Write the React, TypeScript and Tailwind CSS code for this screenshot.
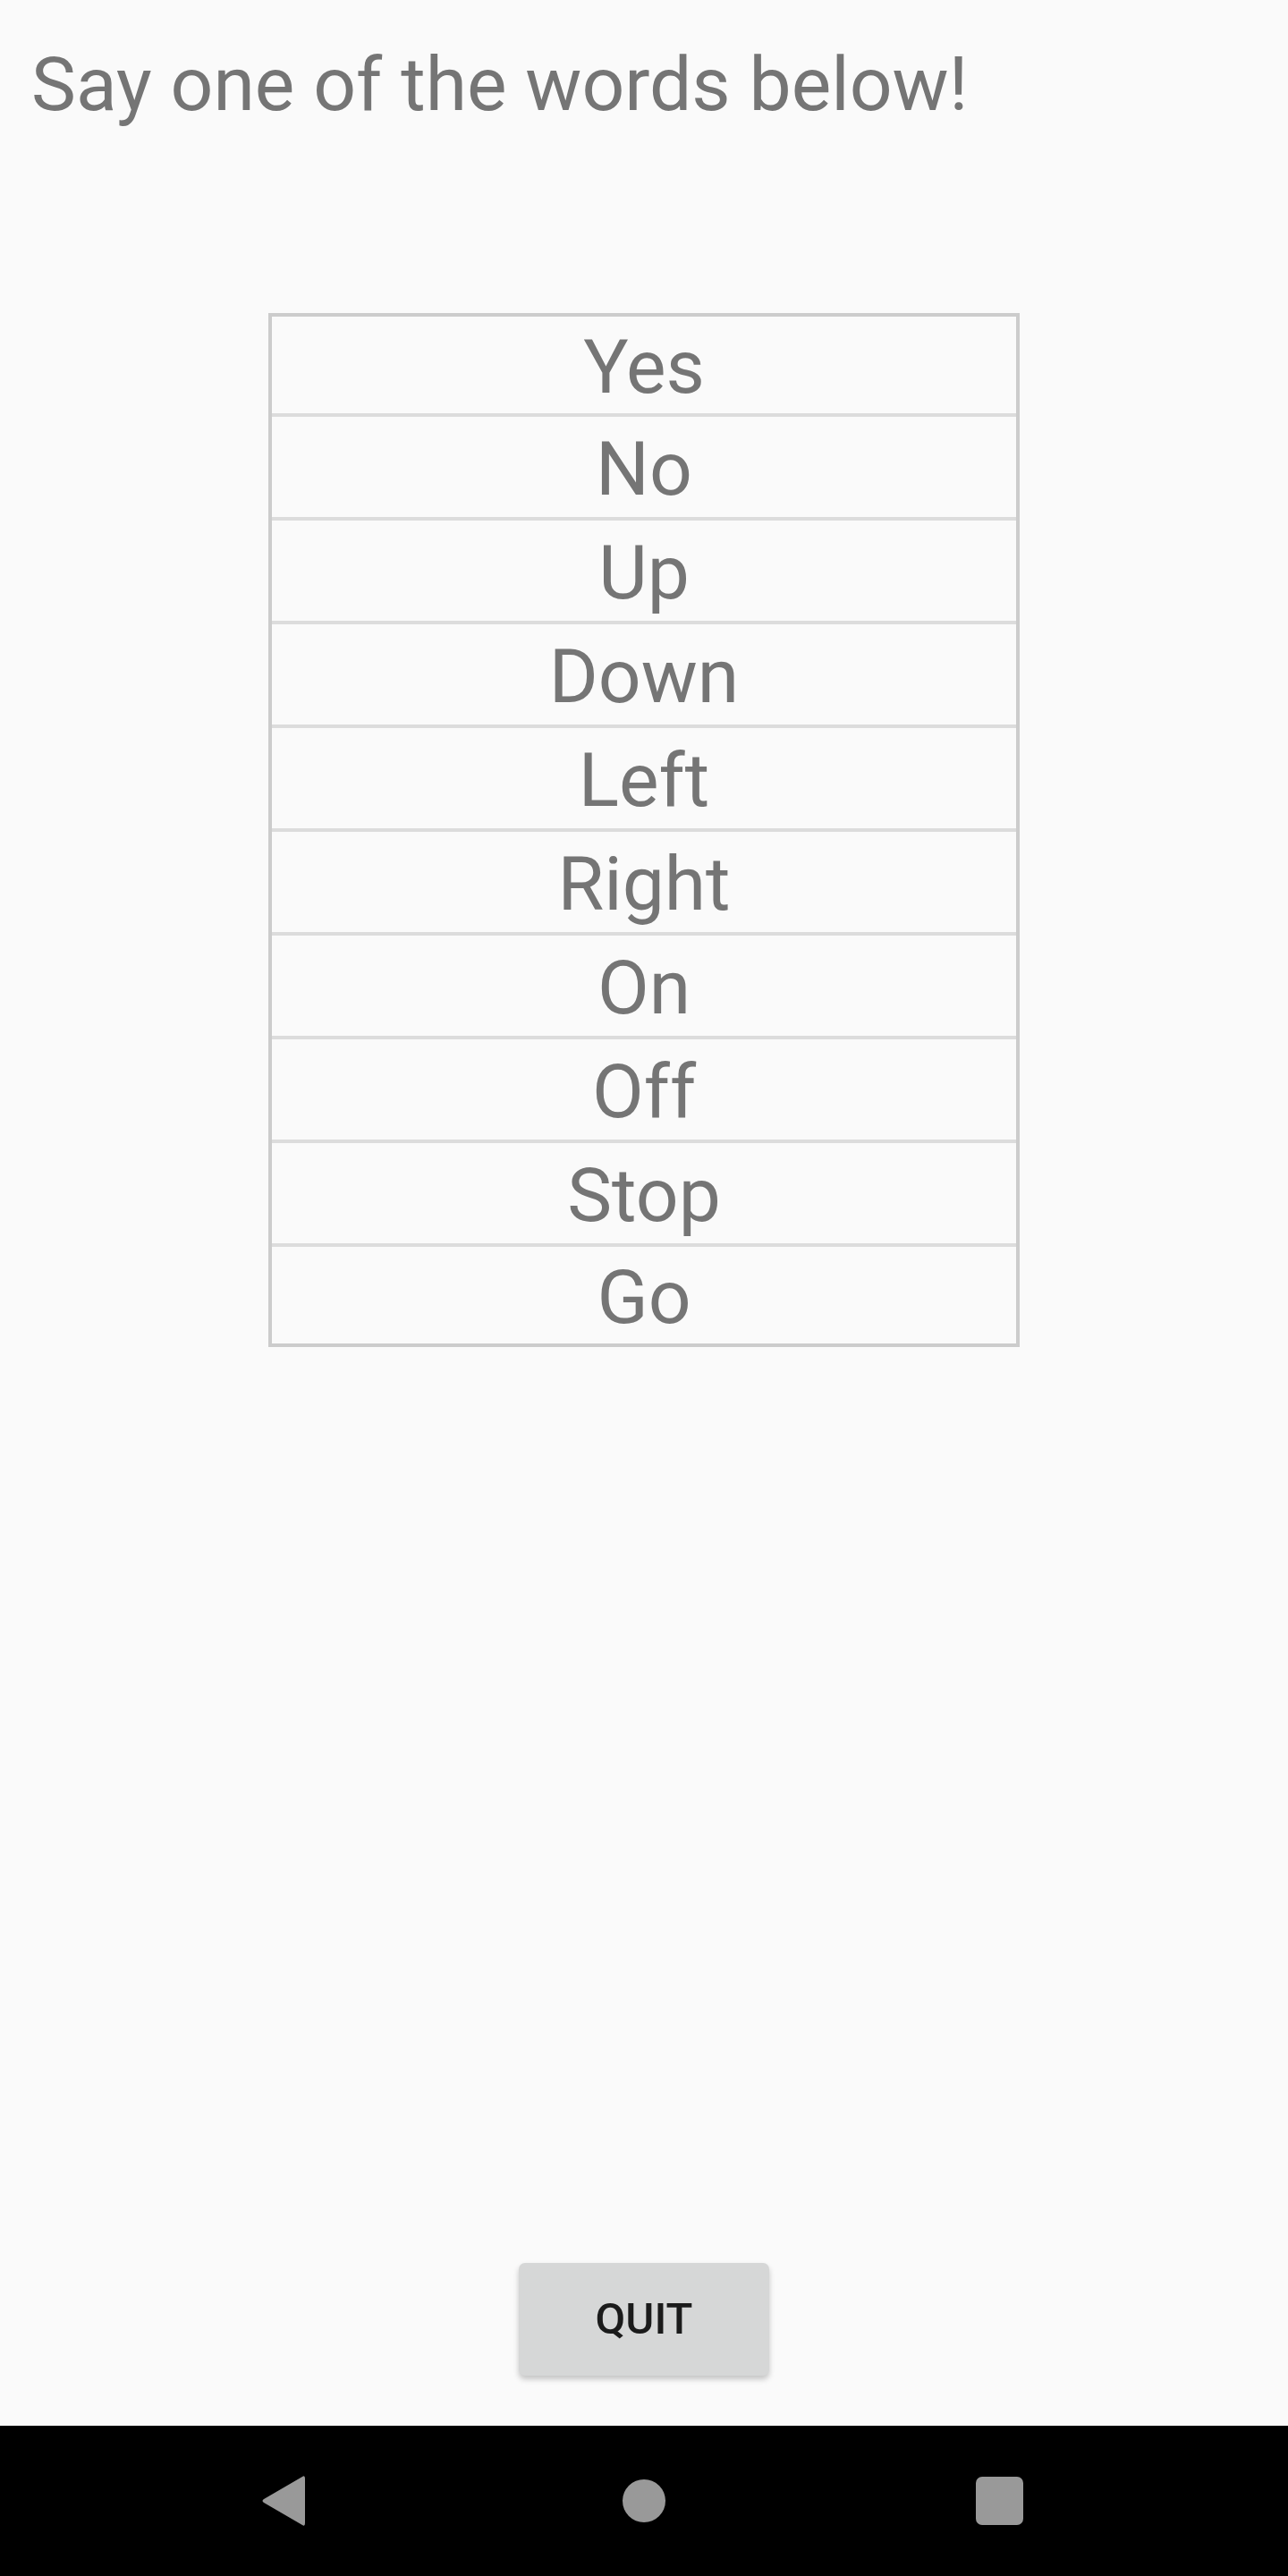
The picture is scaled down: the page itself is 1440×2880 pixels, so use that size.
const words = ['Yes', 'No', 'Up', 'Down', 'Left', 'Right', 'On', 'Off', 'Stop', 'Go'];

const WordRow: React.FC<{ word: string; index: number }> = ({ word, index }) => {
    const first = index === 0;
    const last = index === words.length - 1;
    return (
        <div
            className={
                first
                    ? 'flex h-[108px] items-center justify-center'
                    : last
                      ? 'flex h-[112px] items-center justify-center border-t-4 border-[#dcdcdc]'
                      : 'flex h-[116px] items-center justify-center border-t-4 border-[#dcdcdc]'
            }
        >
            <span className="pt-[5px] text-[84px] leading-[98px] text-[#757575]">{word}</span>
        </div>
    );
};

const App: React.FC = () => {
    return (
        <div
            className="flex h-screen flex-col bg-[#fafafa]"
            style={{ fontFamily: 'Roboto, "Noto Sans", sans-serif' }}
        >
            <h1 className="pl-[35px] pt-[46px] text-[84px] font-normal leading-[98px] text-[#757575]">
                Say one of the words below!
            </h1>

            <div className="mx-auto mt-[206px] w-[840px] border-4 border-[#cccccc]">
                {words.map((w, i) => (
                    <WordRow key={w} word={w} index={i} />
                ))}
            </div>

            <div className="flex-1" />

            <div className="mb-[56px] flex justify-center">
                <button className="flex h-[126px] w-[280px] items-center justify-center rounded-[7px] bg-[#d6d7d7] text-[49px] font-medium text-[#1b1b1b] shadow-[0_4px_6px_rgba(0,0,0,0.22)]">
                    QUIT
                </button>
            </div>

            {/* android nav bar */}
            <div className="flex h-[168px] items-center justify-center bg-black">
                <div className="flex w-[460px] items-center justify-start pl-[56px]">
                    <svg width="50" height="58" viewBox="0 0 50 58">
                        <path
                            d="M46 2 Q49 0 49 4 L49 54 Q49 58 46 56 L3 31 Q0 29 3 27 Z"
                            fill="#999999"
                        />
                    </svg>
                </div>
                <div className="h-[48px] w-[48px] rounded-full bg-[#999999]" />
                <div className="flex w-[460px] items-center justify-end pr-[60px]">
                    <div className="h-[54px] w-[53px] rounded-[7px] bg-[#999999]" />
                </div>
            </div>
        </div>
    );
};

export default App;
